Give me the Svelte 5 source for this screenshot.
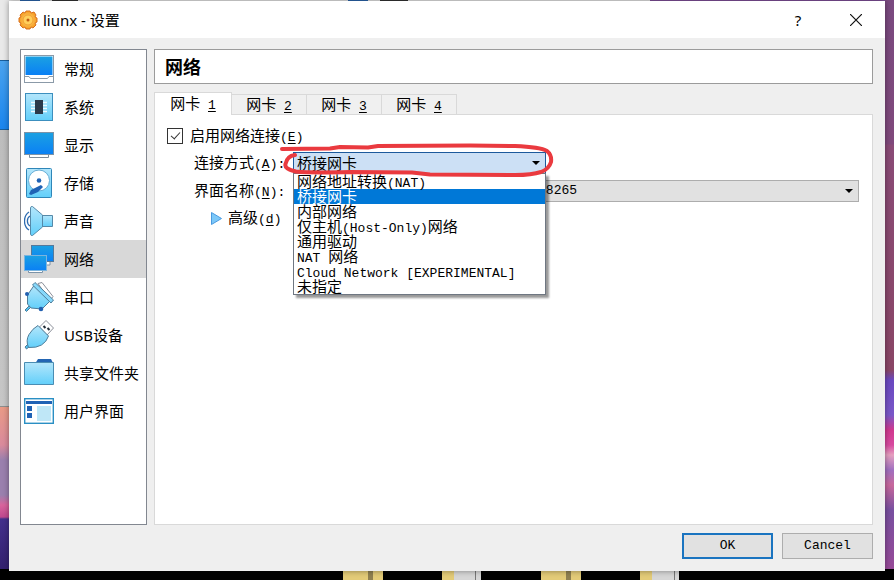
<script>
    // Sidebar categories, icon is the key used in the markup below
    const categories = [
        { icon: 'general', label: '常规' },
        { icon: 'system', label: '系统' },
        { icon: 'display', label: '显示' },
        { icon: 'storage', label: '存储' },
        { icon: 'audio', label: '声音' },
        { icon: 'network', label: '网络' },
        { icon: 'serial', label: '串口' },
        { icon: 'usb', label: 'USB设备' },
        { icon: 'folder', label: '共享文件夹' },
        { icon: 'ui', label: '用户界面' }
    ];

    // An & marks the accelerator key of a label
    const tabs = ['网卡 &1', '网卡 &2', '网卡 &3', '网卡 &4'];

    const attachModes = [
        '网络地址转换(NAT)',
        '桥接网卡',
        '内部网络',
        '仅主机(Host-Only)网络',
        '通用驱动',
        'NAT 网络',
        'Cloud Network [EXPERIMENTAL]',
        '未指定'
    ];

    let category = $state('网络');
    let activeTab = $state(0);
    let enabled = $state(true);
    let attachedTo = $state('桥接网卡');
    let listOpen = $state(true);

    // Split a label into Latin runs, CJK runs and accelerator keys
    function splitRuns(text) {
        return text
            .split(/(&.|[\x20-\x25\x27-\x7e]+)/)
            .filter((part) => part !== '')
            .map((part) => ({
                key: part[0] === '&',
                latin: /^[\x20-\x7e]/.test(part),
                text: part.replace('&', '')
            }));
    }

    function toggleList(event) {
        event.preventDefault();
        listOpen = !listOpen;
    }

    function choose(mode) {
        attachedTo = mode;
        listOpen = false;
    }
</script>

{#snippet runs(text)}{#each splitRuns(text) as run}<span class:latin={run.latin} class:key={run.key}>{run.text}</span>{/each}{/snippet}

<svg class="defs" width="0" height="0" aria-hidden="true">
    <defs>
        <linearGradient id="screen" x1="0" y1="0" x2="0" y2="1">
            <stop offset="0" stop-color="#1ba1e2" />
            <stop offset="1" stop-color="#0a80f5" />
        </linearGradient>
        <linearGradient id="sky" x1="0" y1="0" x2="0" y2="1">
            <stop offset="0" stop-color="#b4e6fb" />
            <stop offset="1" stop-color="#62cffa" />
        </linearGradient>
        <radialGradient id="gear">
            <stop offset="0" stop-color="#ffe27a" />
            <stop offset="1" stop-color="#f59a22" />
        </radialGradient>
    </defs>
</svg>

<div class="desktop">
    <div class="window">
        <header class="titlebar">
            <svg class="app-icon" viewBox="0 0 20 20" aria-hidden="true">
                <path d="M8 1h4l1 2 3-1 2 3-1 2 2 1v4l-2 1 1 2-3 3-2-1-1 2H8l-1-2-2 1-3-3 1-2-2-1V8l2-1-1-2 3-3 2 1z" fill="url(#gear)" stroke="#d9701c" stroke-linejoin="round" />
                <circle cx="10" cy="10" r="5" fill="#ffcf5c" stroke="#f3a034" />
                <circle cx="10" cy="10" r="1.500" fill="#c05a12" />
            </svg>
            <span class="title">liunx - 设置</span>
            <button class="caption help" aria-label="Help">?</button>
            <button class="caption" aria-label="Close">
                <svg width="12" height="12" viewBox="0 0 12 12"><path d="M0 0l12 12M12 0L0 12" stroke="#111" stroke-width="1.2" /></svg>
            </button>
        </header>

        <div class="content">
            <nav class="sidebar">
                {#each categories as item}
                    <button class="category" class:active={category === item.label} onclick={() => (category = item.label)}>
                        <svg class="icon" viewBox="0 0 30 30" aria-hidden="true">
                            {#if item.icon === 'general'}
                                <rect x=".5" y="1.500" width="29" height="27" fill="#fff" stroke="#8b9aa8" />
                                <rect x="1.500" y="2.500" width="27" height="18.500" fill="url(#screen)" />
                                <path d="M1 22.500h4l1.500 2h17l1.500-2h4" fill="#fff" stroke="#8b9aa8" />
                            {:else if item.icon === 'system'}
                                <rect x="1.500" y="1.500" width="27" height="27" fill="url(#sky)" stroke="#3c8fbe" />
                                <path d="M7 10.500h16M7 13.500h16M7 16.500h16M7 19.500h16" stroke="#eefaff" stroke-width="1.300" />
                                <rect x="11" y="8" width="8" height="14" fill="#2b3a4b" />
                            {:else if item.icon === 'display'}
                                <path d="M5.500 24v3.500h19V24" fill="#fff" stroke="#7d8b98" />
                                <rect x=".5" y="2.500" width="29" height="22" fill="url(#screen)" stroke="#7b93a8" />
                            {:else if item.icon === 'storage'}
                                <rect x="2.500" y=".5" width="25" height="29" rx="1" fill="url(#sky)" stroke="#2f86b8" />
                                <circle cx="15" cy="12.500" r="10.500" fill="#fff" stroke="#68aed6" />
                                <path d="M17 17l2 2-5 5-7 3-2-1 2-4z" fill="#1f62b5" />
                                <circle cx="15" cy="12.500" r="2.300" fill="#1f62b5" />
                            {:else if item.icon === 'audio'}
                                <path d="M5 6c-6 4-6 14 0 18M6 10c-3.500 2-3.500 8 0 10" fill="none" stroke="#2d6bb0" stroke-width="1.300" />
                                <path d="M18.500 9.500h10v11h-10z" fill="url(#sky)" stroke="#5689a8" />
                                <path d="M6.500 1.500q0-1 2-1l10 8.500v12l-10 8.500q-2 0-2-1z" fill="url(#sky)" stroke="#5689a8" />
                            {:else if item.icon === 'network'}
                                <path d="M14 18v3h12v-3" fill="#fff" stroke="#7b93a8" />
                                <rect x="7.500" y="1.500" width="22" height="16" fill="url(#screen)" stroke="#55799b" />
                                <path d="M4.500 26v2.500h14V26" fill="#fff" stroke="#7b93a8" />
                                <rect x=".5" y="11.500" width="22" height="15" fill="url(#screen)" stroke="#7bb4de" />
                            {:else if item.icon === 'serial'}
                                <path d="M14 1.500l4-1 11 14-3 4z" fill="#fff" stroke="#8b8f99" />
                                <path d="M5 24l-4 4 1.500 1.500 4-4z" fill="#50bff0" stroke="#4f7d99" />
                                <path d="M10 3.500L3.500 13v9l3.500 4 11 1 8-8z" fill="url(#sky)" stroke="#4f7d99" />
                                <path d="M8.500 3l2.500-2.500L29.500 18 27 21z" fill="#86d8fb" stroke="#4f7d99" />
                                <circle cx="3" cy="12" r="2" fill="#2260b0" />
                                <circle cx="17" cy="27" r="2.300" fill="#2260b0" />
                            {:else if item.icon === 'usb'}
                                <path d="M15.500 7L22 .5 29.500 8 23 15z" fill="#fff" stroke="#8b8f99" />
                                <path d="M19.500 6l2 2M23.500 8l2 2" stroke="#222c38" stroke-width="2" />
                                <path d="M4 24l-3 3 1.500 2 3.500-3z" fill="#50bff0" stroke="#4f7d99" />
                                <path d="M14 5.500L24.500 16q-2 6-7 9t-13 2.500q-3-7 .5-13T14 5.500z" fill="url(#sky)" stroke="#4f7d99" />
                            {:else if item.icon === 'folder'}
                                <path d="M11.500 5l2.500-4h13l2 4z" fill="#2365b3" />
                                <path d="M.5 4.500h29v22H.5z" fill="url(#sky)" stroke="#4a8db3" />
                            {:else}
                                <rect x=".7" y="2.700" width="28.600" height="24.600" fill="#fff" stroke="#2a8fc4" stroke-width="1.400" />
                                <path d="M2 5h26v3H2zM3 10h5v5H3zM3 17h5v5H3z" fill="#1f62b5" />
                                <rect x="13" y="10" width="14" height="15" fill="#bfe7f7" />
                            {/if}
                        </svg>
                        <span>{item.label}</span>
                    </button>
                {/each}
            </nav>

            <main class="page">
                <h1 class="heading">{category}</h1>

                <div class="tabs" role="tablist">
                    {#each tabs as tab, i}
                        <button class="tab" class:current={activeTab === i} role="tab" aria-selected={activeTab === i} onclick={() => (activeTab = i)}>{@render runs(tab)}</button>
                    {/each}
                    <span class="tab-rule"></span>
                </div>

                <section class="panel">
                    <label class="enable">
                        <input type="checkbox" bind:checked={enabled} />
                        <span>{@render runs('启用网络连接(&E)')}</span>
                    </label>

                    <div class="row">
                        <label class="name" for="attach">{@render runs('连接方式(&A):')}</label>
                        <div class="combo attach">
                            <select id="attach" bind:value={attachedTo} onmousedown={toggleList}>
                                {#each attachModes as mode}
                                    <option value={mode}>{mode}</option>
                                {/each}
                            </select>
                            <svg class="arrow" viewBox="0 0 8 4" aria-hidden="true"><path d="M0 0h8L4 4z" /></svg>
                            {#if listOpen}
                                <ul class="popup" role="listbox" aria-label="连接方式">
                                    {#each attachModes as mode}
                                        <li role="option" aria-selected={attachedTo === mode}>
                                            <button class="mode" class:selected={attachedTo === mode} onclick={() => choose(mode)}>{@render runs(mode)}</button>
                                        </li>
                                    {/each}
                                </ul>
                            {/if}
                            <!-- hand-drawn red marker around the combo -->
                            <svg class="marker" viewBox="278 143 280 36" aria-hidden="true">
                                <path d="M282 150L330 149.500 340 148 368 148.500 378 147 470 146.500 515 147Q540 148 547 152 552 156 551 163 549 170 541 173 532 176 515 176L430 175.500 412 173.500 350 173Q310 174 296 172.500 284 170 285.500 165 287 157 295 156" />
                            </svg>
                        </div>
                    </div>

                    <div class="row">
                        <label class="name" for="adapter">{@render runs('界面名称(&N):')}</label>
                        <div class="combo adapter">
                            <select id="adapter">
                                <option>Intel(R) Dual Band Wireless-AC 8265</option>
                            </select>
                            <svg class="arrow" viewBox="0 0 8 4" aria-hidden="true"><path d="M0 0h8L4 4z" /></svg>
                        </div>
                    </div>

                    <button class="advanced">
                        <svg width="11" height="13" viewBox="0 0 11 13" aria-hidden="true"><path d="M.5.500l10 6-10 6z" fill="#7cc8f8" stroke="#4a9ae0" /></svg>
                        <span>{@render runs('高级(&d)')}</span>
                    </button>
                </section>
            </main>
        </div>

        <footer class="actions">
            <button class="action default">OK</button>
            <button class="action">Cancel</button>
        </footer>
    </div>
</div>

<style>
    :global(body) {
        margin: 0;
    }

    .desktop {
        box-sizing: border-box;
        min-height: 100vh;
        padding: 1px 9px 9px;
        display: flex;
        font-family: "Noto Sans CJK SC", sans-serif;
        font-size: 15px;
        line-height: 20px;
        color: #000;
        /* folders along the bottom, then the left, right and top edges */
        background:
            linear-gradient(90deg, transparent 343px, #e3cb78 343px 368px, #8f8050 368px 373px, #e3cb78 373px 383px, transparent 383px 442px, #e3cb78 442px 454px, #d6d6d6 454px 475px, #777 475px 476px, #d6d6d6 476px 481px, transparent 481px 541px, #e3cb78 541px 566px, #8f8050 566px 571px, #e3cb78 571px 581px, transparent 581px 640px, #e3cb78 640px 652px, #d6d6d6 652px 674px, #777 674px 675px, #d6d6d6 675px 679px, transparent 679px) left bottom / 100% 9px no-repeat,
            linear-gradient(#000, #000) left bottom / 100% 11px no-repeat,
            linear-gradient(#e9e9e9 60px, #1b5f9c 60px 61px, #4ba3ee 61px, #1a85ee 129px, #1b5f9c 129px 130px, #bdbdbd 130px, #c6c6c6 406px, #8e8e8e 406px 407px, #e99a86 407px, #d98a9c 445px, #9a80ae 460px 495px, #d9649c 505px, #c0488e 517px, #43308c 519px, #33206e 570px) left top / 9px 100% no-repeat,
            linear-gradient(#7a4a80, #80497c 144px, #8a4b77 145px, #8a4666 370px, #6a48c0 380px, #7a58c8 415px, #d0388e 430px, #d84aa0 445px, #e6a0c0 455px, #a070c0 470px, #c8689c 485px, #7850a0 510px, #984a98 570px) right top / 9px 100% no-repeat,
            linear-gradient(90deg, #e4e4e4 20px, #2a64ac 20px 40px, #e4e4e4 40px 52px, #333 52px 78px, #e4e4e4 78px 348px, #2a64ac 348px 368px, #e4e4e4 368px 380px, #333 380px 408px, #e4e4e4 408px 650px, #80509a 650px) left top / 100% 1px no-repeat,
            #000;
    }

    .latin {
        font-family: "Liberation Mono", monospace;
        font-size: 13px;
        white-space: pre;
    }

    .key {
        text-decoration: underline;
        text-underline-offset: 2px;
    }

    .defs {
        position: absolute;
    }

    button,
    select {
        font: inherit;
        color: inherit;
        border: none;
        border-radius: 0;
        background: none;
        padding: 0;
        margin: 0;
        outline: none;
    }

    .window {
        flex: 1;
        min-width: 0;
        display: flex;
        flex-direction: column;
        background: #efefef;
        box-shadow: 0 0 6px rgba(0, 0, 0, 0.4);
    }

    .titlebar {
        display: flex;
        align-items: center;
        height: 37px;
        padding-left: 9px;
        background: #fff;
    }

    .app-icon {
        width: 20px;
        height: 20px;
    }

    .title {
        flex: 1;
        margin-left: 5px;
        font-family: "Noto Sans", "Noto Sans CJK SC", sans-serif;
    }

    .caption {
        display: flex;
        align-items: center;
        justify-content: center;
        width: 58px;
        height: 37px;
    }

    .help {
        font-family: "Noto Sans", sans-serif;
    }

    .content {
        flex: 1;
        display: flex;
        gap: 7px;
        padding: 11px 12px 0 11px;
    }

    .sidebar {
        box-sizing: border-box;
        flex: none;
        width: 127px;
        border: 1px solid #828790;
        background: #fff;
    }

    .category {
        display: flex;
        align-items: center;
        gap: 10px;
        width: 100%;
        height: 38px;
        padding-left: 3px;
        font-family: "Noto Sans", "Noto Sans CJK SC", sans-serif;
        white-space: nowrap;
    }

    .category.active {
        background: #d8d8d8;
    }

    .icon {
        flex: none;
        width: 30px;
        height: 30px;
    }

    .page {
        flex: 1;
        min-width: 0;
        display: flex;
        flex-direction: column;
    }

    .heading {
        box-sizing: border-box;
        height: 35px;
        margin: 0 0 8px;
        padding-left: 10px;
        border: 1px solid #9b9b9b;
        background: #fff;
        font-size: 18px;
        line-height: 32px;
    }

    .tabs {
        display: flex;
        align-items: flex-end;
    }

    .tab {
        box-sizing: border-box;
        width: 75px;
        height: 21px;
        border: 1px solid #d9d9d9;
        border-left: none;
        background: #f0f0f0;
        line-height: 18px;
    }

    .tab.current {
        width: 78px;
        height: 23px;
        border-left: 1px solid #d9d9d9;
        border-bottom: none;
        background: #fff;
    }

    .tab-rule {
        flex: 1;
        height: 1px;
        background: #d9d9d9;
    }

    .panel {
        flex: 1;
        padding: 11px 13px 0 12px;
        border: 1px solid #d9d9d9;
        border-top: none;
        background: #fff;
    }

    .enable {
        display: flex;
        align-items: center;
        gap: 7px;
        height: 20px;
    }

    .enable input {
        appearance: none;
        width: 16px;
        height: 16px;
        margin: 0;
        border: 1px solid #333;
        background: #fff;
    }

    .enable input:checked::before {
        content: "";
        display: block;
        width: 4px;
        height: 8px;
        margin: 1px 0 0 5px;
        border: solid #333;
        border-width: 0 1px 1px 0;
        transform: rotate(42deg);
    }

    .row {
        display: flex;
        align-items: center;
        height: 22px;
        margin-top: 6px;
    }

    .name {
        flex: none;
        width: 99px;
        padding-left: 27px;
    }

    .combo {
        position: relative;
        height: 22px;
    }

    .attach {
        width: 253px;
    }

    .adapter {
        flex: 1;
    }

    .combo select {
        display: block;
        appearance: none;
        box-sizing: border-box;
        width: 100%;
        height: 22px;
        border: 1px solid #adadad;
        background: #e1e1e1;
    }

    .attach select {
        padding-left: 3px;
        border-color: #1c5a9c;
        background: #cce0f5;
    }

    .adapter select {
        padding-left: 10px;
        font-family: "Liberation Mono", monospace;
        font-size: 13px;
    }

    .arrow {
        position: absolute;
        top: 9px;
        right: 6px;
        width: 8px;
        height: 4px;
        pointer-events: none;
    }

    .popup {
        position: absolute;
        z-index: 1;
        top: 21px;
        left: 0;
        right: 0;
        margin: 0;
        padding: 0;
        list-style: none;
        border: 1px solid #6f7782;
        background: #fff;
        box-shadow: 3px 3px 2px rgba(0, 0, 0, 0.4);
    }

    .mode {
        display: block;
        box-sizing: border-box;
        width: 100%;
        height: 15px;
        padding: 0 0 2px 3px;
        line-height: 13px;
        text-align: left;
        white-space: nowrap;
    }

    .mode.selected {
        background: #0078d7;
        color: #fff;
    }

    .marker {
        position: absolute;
        z-index: 2;
        top: -10px;
        left: -15px;
        width: 280px;
        height: 36px;
        fill: none;
        stroke: #ea3a3f;
        stroke-width: 4;
        stroke-linecap: round;
        stroke-linejoin: round;
        pointer-events: none;
    }

    .advanced {
        display: flex;
        align-items: center;
        gap: 6px;
        height: 20px;
        margin: 6px 0 0 44px;
    }

    .actions {
        display: flex;
        justify-content: flex-end;
        gap: 9px;
        padding: 8px 12px 12px;
    }

    .action {
        box-sizing: border-box;
        width: 91px;
        height: 26px;
        border: 1px solid #adadad;
        background: #e1e1e1;
        font-family: "Liberation Mono", monospace;
        font-size: 13px;
    }

    .action.default {
        border: 2px solid #1a74c0;
    }
</style>
